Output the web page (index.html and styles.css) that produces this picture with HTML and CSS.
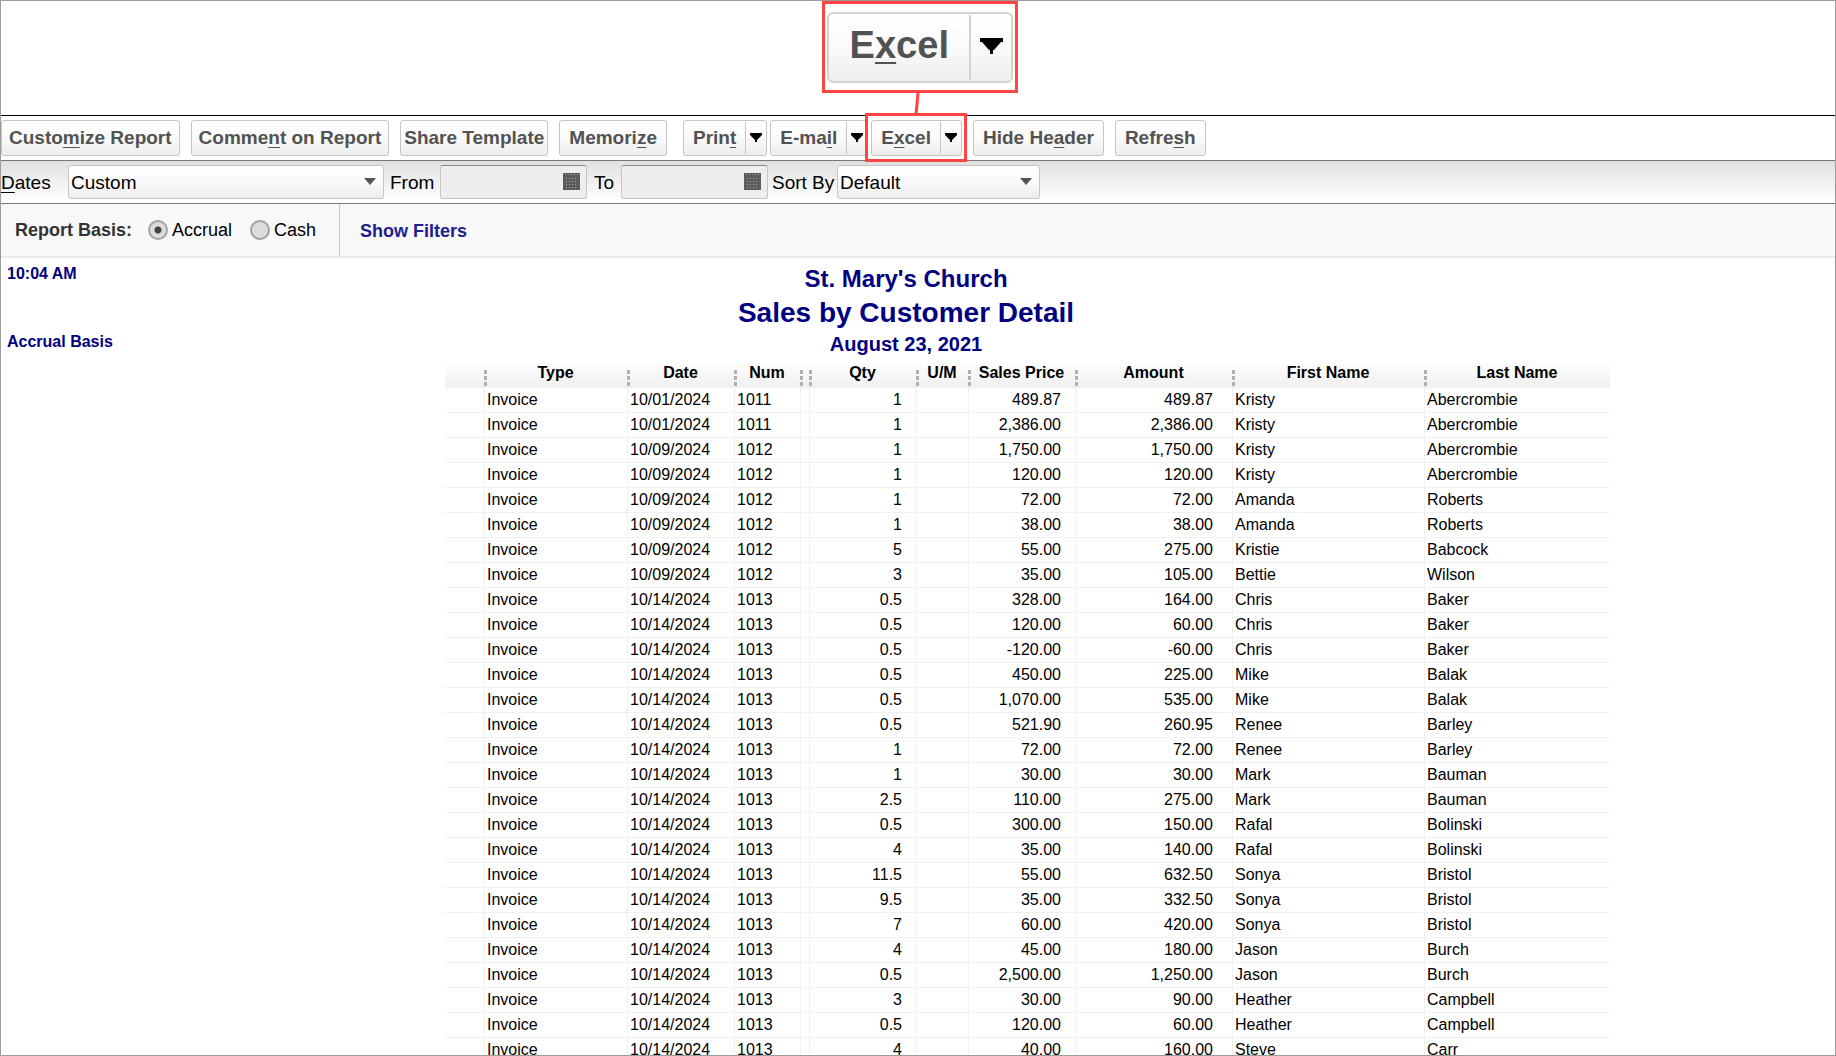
FILE: index.html
```html
<!DOCTYPE html>
<html lang="en">
<head>
  <meta charset="UTF-8" />
  <meta name="viewport" content="width=device-width, initial-scale=1.0"/>
  <title>Sales by Customer Detail</title>
  <link rel="stylesheet" href="styles.css">
</head>
<body>

  <div class="window">
    <div class="toolbar">
      <button class="btn">Custo<u>m</u>ize Report</button>
      <button class="btn">Comme<u>n</u>t on Report</button>
      <button class="btn btn-tight">Share Template</button>
      <button class="btn btn-wide">Memori<u>z</u>e</button>
      <div class="btn-group">
        <div class="split">
          <button class="split-main">Prin<u>t</u></button>
          <button class="split-arrow" aria-label="Print options"><svg viewBox="0 0 12 9"><path d="M0 0h12v2L7 7v2H5V7L0 2z"/></svg></button>
        </div>
        <div class="split">
          <button class="split-main">E-ma<u>i</u>l</button>
          <button class="split-arrow" aria-label="E-mail options"><svg viewBox="0 0 12 9"><path d="M0 0h12v2L7 7v2H5V7L0 2z"/></svg></button>
        </div>
        <div class="split highlighted">
          <button class="split-main">E<u>x</u>cel</button>
          <button class="split-arrow" aria-label="Excel options"><svg viewBox="0 0 12 9"><path d="M0 0h12v2L7 7v2H5V7L0 2z"/></svg></button>
          <!-- enlarged view of the Excel button -->
          <div class="callout">
            <div class="split split-large">
              <button class="split-main">E<u>x</u>cel</button>
              <button class="split-arrow" aria-label="Excel options, enlarged"><svg viewBox="0 0 23 17"><path d="M0 0h23v4h-2l-7 8h-1v4h-3v-4H9L2 4H0z"/></svg></button>
            </div>
            <svg class="connector" viewBox="0 0 6 22"><path d="M4 0L2 22"/></svg>
          </div>
        </div>
      </div>
      <button class="btn btn-wide">Hide He<u>a</u>der</button>
      <button class="btn btn-wide">Refre<u>s</u>h</button>
    </div>

    <div class="options">
      <label class="dates-label" for="dates"><u>D</u>ates</label>
      <div class="select select-dates">
        <select id="dates"><option>Custom</option></select>
      </div>
      <label class="from-label" for="from">From</label>
      <div class="date-box">
        <input type="text" id="from" />
        <svg viewBox="0 0 17 17"><path fill="#5c5c5c" d="M0 0h17v17H0z"/><path stroke="#a5a5a5" stroke-dasharray="1 2" d="M2 1.500h13M3 5.500h12M3 8.500h12M3 11.500h12M3 14.500h12"/></svg>
      </div>
      <label class="to-label" for="to">To</label>
      <div class="date-box">
        <input type="text" id="to" />
        <svg viewBox="0 0 17 17"><path fill="#5c5c5c" d="M0 0h17v17H0z"/><path stroke="#a5a5a5" stroke-dasharray="1 2" d="M2 1.500h13M3 5.500h12M3 8.500h12M3 11.500h12M3 14.500h12"/></svg>
      </div>
      <label class="sort-label" for="sort">Sort By</label>
      <div class="select select-sort">
        <select id="sort"><option>Default</option></select>
      </div>
    </div>

    <div class="basis">
      <div class="basis-choice">
        <span class="basis-title">Report Basis:</span>
        <label><input type="radio" name="basis" checked /> Accrual</label>
        <label><input type="radio" name="basis" /> Cash</label>
      </div>
      <a class="filters" href="#">Show Filters</a>
    </div>

    <div class="report-header">
      <div class="report-meta">
        <span>10:04 AM</span>
        <span>Accrual Basis</span>
      </div>
      <div class="report-title">
        <h2>St. Mary's Church</h2>
        <h1>Sales by Customer Detail</h1>
        <h3>August 23, 2021</h3>
      </div>
    </div>

    <table>
      <colgroup>
        <col class="col-margin"><col class="col-type"><col class="col-date"><col class="col-num"><col class="col-gap">
        <col class="col-qty"><col class="col-um"><col class="col-price"><col class="col-amount"><col class="col-first"><col class="col-last">
      </colgroup>
      <thead>
        <tr>
          <th></th>
          <th>Type</th>
          <th>Date</th>
          <th>Num</th>
          <th></th>
          <th>Qty</th>
          <th>U/M</th>
          <th>Sales Price</th>
          <th>Amount</th>
          <th>First Name</th>
          <th>Last Name</th>
        </tr>
      </thead>
      <tbody id="salesTableBody"></tbody>
    </table>
  </div>

  <script>
    // date, num, qty, price, amount, first name, last name
    const sales = [
      ["10/01/2024", "1011", "1", "489.87", "489.87", "Kristy", "Abercrombie"],
      ["10/01/2024", "1011", "1", "2,386.00", "2,386.00", "Kristy", "Abercrombie"],
      ["10/09/2024", "1012", "1", "1,750.00", "1,750.00", "Kristy", "Abercrombie"],
      ["10/09/2024", "1012", "1", "120.00", "120.00", "Kristy", "Abercrombie"],
      ["10/09/2024", "1012", "1", "72.00", "72.00", "Amanda", "Roberts"],
      ["10/09/2024", "1012", "1", "38.00", "38.00", "Amanda", "Roberts"],
      ["10/09/2024", "1012", "5", "55.00", "275.00", "Kristie", "Babcock"],
      ["10/09/2024", "1012", "3", "35.00", "105.00", "Bettie", "Wilson"],
      ["10/14/2024", "1013", "0.5", "328.00", "164.00", "Chris", "Baker"],
      ["10/14/2024", "1013", "0.5", "120.00", "60.00", "Chris", "Baker"],
      ["10/14/2024", "1013", "0.5", "-120.00", "-60.00", "Chris", "Baker"],
      ["10/14/2024", "1013", "0.5", "450.00", "225.00", "Mike", "Balak"],
      ["10/14/2024", "1013", "0.5", "1,070.00", "535.00", "Mike", "Balak"],
      ["10/14/2024", "1013", "0.5", "521.90", "260.95", "Renee", "Barley"],
      ["10/14/2024", "1013", "1", "72.00", "72.00", "Renee", "Barley"],
      ["10/14/2024", "1013", "1", "30.00", "30.00", "Mark", "Bauman"],
      ["10/14/2024", "1013", "2.5", "110.00", "275.00", "Mark", "Bauman"],
      ["10/14/2024", "1013", "0.5", "300.00", "150.00", "Rafal", "Bolinski"],
      ["10/14/2024", "1013", "4", "35.00", "140.00", "Rafal", "Bolinski"],
      ["10/14/2024", "1013", "11.5", "55.00", "632.50", "Sonya", "Bristol"],
      ["10/14/2024", "1013", "9.5", "35.00", "332.50", "Sonya", "Bristol"],
      ["10/14/2024", "1013", "7", "60.00", "420.00", "Sonya", "Bristol"],
      ["10/14/2024", "1013", "4", "45.00", "180.00", "Jason", "Burch"],
      ["10/14/2024", "1013", "0.5", "2,500.00", "1,250.00", "Jason", "Burch"],
      ["10/14/2024", "1013", "3", "30.00", "90.00", "Heather", "Campbell"],
      ["10/14/2024", "1013", "0.5", "120.00", "60.00", "Heather", "Campbell"],
      ["10/14/2024", "1013", "4", "40.00", "160.00", "Steve", "Carr"]
    ];

    document.getElementById("salesTableBody").innerHTML = sales.map(([date, num, qty, price, amount, first, last]) => `
      <tr>
        <td></td>
        <td>Invoice</td>
        <td>${date}</td>
        <td>${num}</td>
        <td></td>
        <td class="number">${qty}</td>
        <td></td>
        <td class="number">${price}</td>
        <td class="number amount">${amount}</td>
        <td>${first}</td>
        <td>${last}</td>
      </tr>
    `).join("");
  </script>

</body>
</html>
```
FILE: styles.css
```css
* {
  box-sizing: border-box;
}

body {
  margin: 0;
  font-family: "Liberation Sans", Arial, sans-serif;
  color: #000;
  background: #fff;
}

button, input, select {
  font-family: inherit;
  margin: 0;
}

.window {
  height: 100vh;
  overflow: hidden;
  border: 1px solid #9c9c9c;
  padding-top: 114px;
}

/* toolbar */
.toolbar {
  display: flex;
  align-items: center;
  gap: 11px;
  height: 45px;
  border-top: 1px solid #000;
}

.btn,
.split {
  height: 36px;
  border: 1px solid #c6c6c6;
  border-radius: 3px;
  background: linear-gradient(#fff, #fafafa 50%, #ededed);
}

.btn,
.split-main {
  padding: 0 7px;
  font-size: 19px;
  font-weight: bold;
  color: #525252;
  white-space: nowrap;
}

.btn u,
.split-main u {
  text-decoration-thickness: 1px;
  text-underline-offset: 3px;
}

.btn-tight {
  padding: 0 3px;
}

.btn-wide {
  padding: 0 9px;
}

.btn-group {
  display: flex;
  gap: 3px;
  margin-left: 5px;
}

.split {
  position: relative;
  display: flex;
}

.split-main,
.split-arrow {
  border: none;
  background: none;
}

.split-main {
  padding: 0 9px;
}

.split-arrow {
  width: 21px;
  padding: 0;
  margin: 1px 0;
  border-left: 1px solid #c6c6c6;
}

.split-arrow svg {
  display: block;
  width: 12px;
  height: 9px;
  margin: -2px auto 0;
}

.highlighted::after {
  content: "";
  position: absolute;
  inset: -8px -6px -7px -7px;
  border: 3px solid #ff4444;
}

.callout {
  position: absolute;
  left: -50px;
  bottom: 62px;
  width: 196px;
  height: 92px;
  padding: 8px 2px;
  border: 3px solid #ff4444;
  background: #fff;
}

.split-large {
  height: 71px;
  border: 2px solid #d2d2d2;
  border-radius: 6px;
}

.split-large .split-main {
  flex: 1;
  padding: 0 0 4px;
  font-size: 38px;
}

.split-large .split-main u {
  text-decoration-thickness: 2px;
  text-underline-offset: 4px;
}

.split-large .split-arrow {
  width: 42px;
  border-left: 2px solid #d2d2d2;
}

.split-large .split-arrow svg {
  width: 23px;
  height: 17px;
}

.connector {
  position: absolute;
  left: 89px;
  top: 89px;
  width: 6px;
  height: 22px;
  fill: none;
  stroke: #ff4444;
  stroke-width: 3;
}

/* date range and sorting */
.options {
  display: flex;
  align-items: center;
  height: 44px;
  border-top: 1px solid #777;
  border-bottom: 1px solid #777;
  background: linear-gradient(#e0e0e0, #fdfdfd 90%);
  font-size: 19px;
}

.options label {
  padding-top: 1px;
}

.options u {
  text-decoration-thickness: 1px;
  text-underline-offset: 3px;
}

.dates-label {
  width: 67px;
}

.from-label {
  width: 56px;
  padding-left: 6px;
}

.to-label {
  width: 34px;
  padding-left: 7px;
}

.sort-label {
  width: 69px;
  padding-left: 4px;
}

.select,
.date-box {
  position: relative;
  height: 34px;
}

.select-dates {
  width: 316px;
}

.select-sort {
  width: 203px;
}

.date-box {
  width: 147px;
}

.select select,
.date-box input {
  width: 100%;
  height: 100%;
  padding: 1px 2px 0;
  border: 1px solid #c6c6c6;
  border-radius: 3px;
  font-size: 19px;
  color: #000;
}

.select select {
  appearance: none;
  background: linear-gradient(#fff, #fafafa 50%, #ededed);
}

.select::after {
  content: "";
  position: absolute;
  right: 8px;
  top: 13px;
  border: 6px solid transparent;
  border-top: 7px solid #555;
  border-bottom: none;
}

.date-box input {
  border-top-color: #8c8c8c;
  background: #eee;
}

.date-box svg {
  position: absolute;
  right: 7px;
  top: 8px;
  width: 17px;
  height: 17px;
}

/* report basis */
.basis {
  display: flex;
  height: 54px;
  border-bottom: 2px solid #ebebeb;
  background: #f8f8f8;
  font-size: 18px;
}

.basis-choice {
  display: flex;
  align-items: center;
  width: 339px;
  padding-left: 14px;
  border-right: 1px solid #c8c8c8;
}

.basis-title {
  width: 133px;
  font-weight: bold;
  color: #333;
}

.basis-choice label {
  display: flex;
  align-items: center;
  gap: 4px;
  margin-right: 18px;
}

.basis-choice input {
  appearance: none;
  width: 20px;
  height: 20px;
  border: 2px solid #a2a2a2;
  border-radius: 50%;
  background: #dcdcdc;
}

.basis-choice input:checked {
  background: radial-gradient(#444 0 3px, #dcdcdc 4px);
}

.filters {
  align-self: center;
  padding-top: 2px;
  margin-left: 20px;
  font-weight: bold;
  color: #20208f;
  text-decoration: none;
}

/* report */
.report-header {
  display: grid;
  grid-template-columns: 1fr auto 1fr;
  height: 105px;
  padding-right: 24px;
  color: #000080;
}

.report-meta {
  display: flex;
  flex-direction: column;
  gap: 50px;
  padding: 7px 6px;
  font-size: 16px;
  line-height: 18px;
  font-weight: bold;
}

.report-title {
  padding-top: 4px;
  text-align: center;
}

.report-title h1,
.report-title h2,
.report-title h3 {
  margin: 0;
  font-size: 28px;
  line-height: 34px;
}

.report-title h2 {
  font-size: 24px;
}

.report-title h3 {
  font-size: 20px;
  line-height: 28px;
}

table {
  table-layout: fixed;
  width: 1165px;
  margin-left: 444px;
  border-collapse: separate;
  border-spacing: 0;
  font-size: 16px;
  line-height: 24px;
}

.col-margin { width: 39px; }
.col-type { width: 143px; }
.col-date { width: 107px; }
.col-num { width: 66px; }
.col-gap { width: 9px; }
.col-qty { width: 107px; }
.col-um { width: 52px; }
.col-price { width: 107px; }
.col-amount { width: 157px; }
.col-first { width: 192px; }
.col-last { width: 186px; }

thead tr {
  background: linear-gradient(#fdfdfd, #f0f0f0);
}

th {
  height: 25px;
  padding: 0 0 5px;
  line-height: 20px;
}

/* drag handle on the left edge of each column */
th + th {
  background: repeating-linear-gradient(#b0b0b0 0 4px, transparent 4px 6px) 0 7px / 3px 16px no-repeat;
}

td {
  height: 25px;
  padding: 0 2px;
  border-bottom: 1px solid #f0f0f0;
  white-space: nowrap;
}

td + td {
  border-left: 1px solid #f0f0f0;
}

.number {
  padding-right: 14px;
  text-align: right;
}

.amount {
  padding-right: 19px;
}
```
